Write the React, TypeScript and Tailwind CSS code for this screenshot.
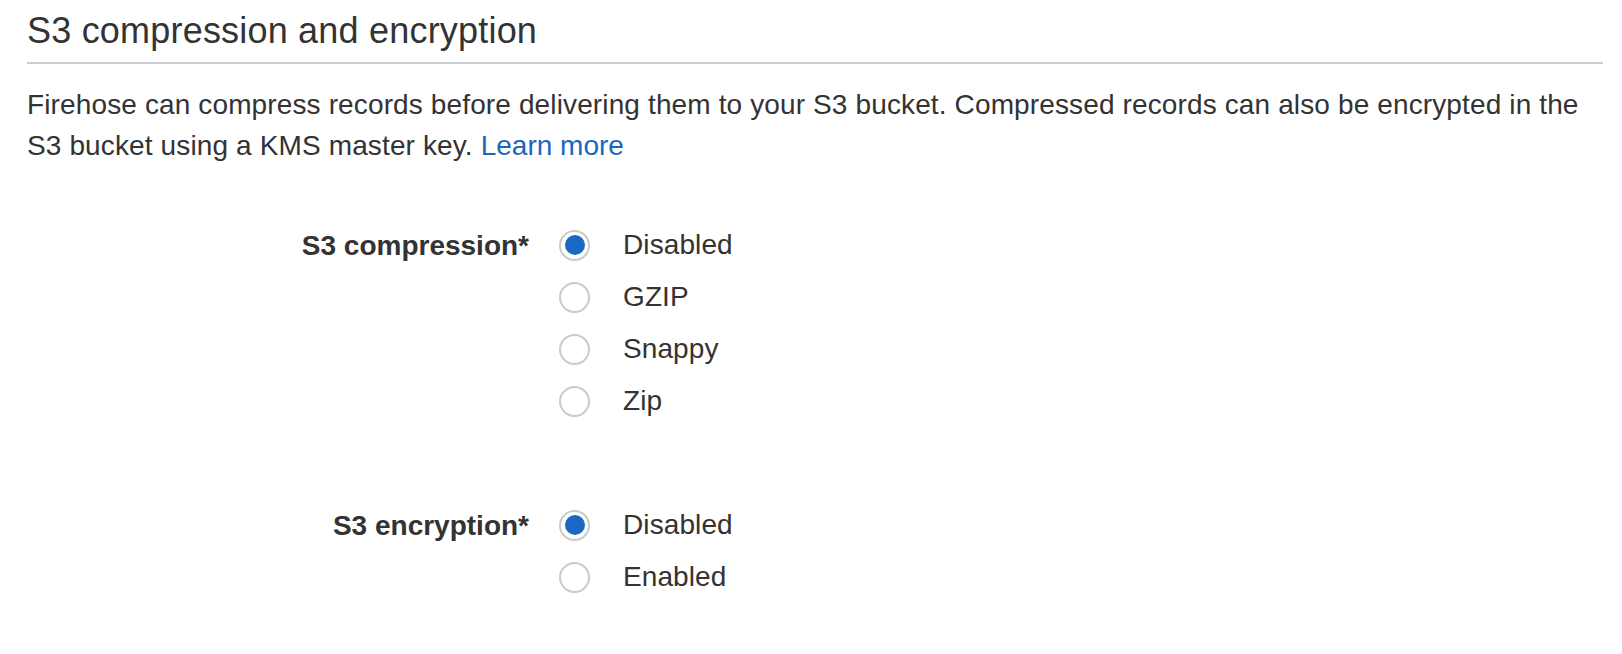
import { useState } from "react";

type Group = {
  id: string;
  label: string;
  options: string[];
};

const groups: Group[] = [
  {
    id: "compression",
    label: "S3 compression*",
    options: ["Disabled", "GZIP", "Snappy", "Zip"],
  },
  {
    id: "encryption",
    label: "S3 encryption*",
    options: ["Disabled", "Enabled"],
  },
];

function Radio({ checked }: { checked: boolean }) {
  return (
    <span className="w-[31px] h-[31px] rounded-full border-2 border-[#cbcbcb] bg-white flex items-center justify-center shrink-0">
      {checked && <span className="w-[20px] h-[20px] rounded-full bg-[#1b68c0]" />}
    </span>
  );
}

export default function App() {
  const [values, setValues] = useState<Record<string, string>>({
    compression: "Disabled",
    encryption: "Disabled",
  });

  return (
    <div className="min-h-screen w-full bg-white text-[#333] font-['Liberation_Sans','Helvetica_Neue',Arial,sans-serif]">
      <div className="pl-[27px] pr-[19px] pt-[11px]">
        <h2 className="text-[36px] leading-[40px] font-normal tracking-[0.2px] text-[#333]">
          S3 compression and encryption
        </h2>
        <div className="mt-[11px] h-[2px] bg-[#cccccc]" />
        <p className="mt-[20px] text-[28px] leading-[41px] tracking-[0.13px]">
          Firehose can compress records before delivering them to your S3 bucket. Compressed records can also be encrypted in the S3 bucket using a KMS master key.{" "}
          <a href="#" className="text-[#1a66bf] tracking-normal">
            Learn more
          </a>
        </p>

        <div className="mt-[53px] flex flex-col gap-[72px]">
          {groups.map((g) => (
            <div key={g.id} className="flex">
              <div className="w-[502px] shrink-0 text-right text-[28px] font-bold leading-[54px]">
                {g.label}
              </div>
              <div className="ml-[30px] flex flex-col">
                {g.options.map((opt) => (
                  <label
                    key={opt}
                    className="h-[52px] flex items-center gap-[33px] cursor-pointer"
                    onClick={() => setValues((prev) => ({ ...prev, [g.id]: opt }))}
                  >
                    <Radio checked={values[g.id] === opt} />
                    <span className="text-[28px] leading-[52px] tracking-[0.1px]">{opt}</span>
                  </label>
                ))}
              </div>
            </div>
          ))}
        </div>
      </div>
    </div>
  );
}
